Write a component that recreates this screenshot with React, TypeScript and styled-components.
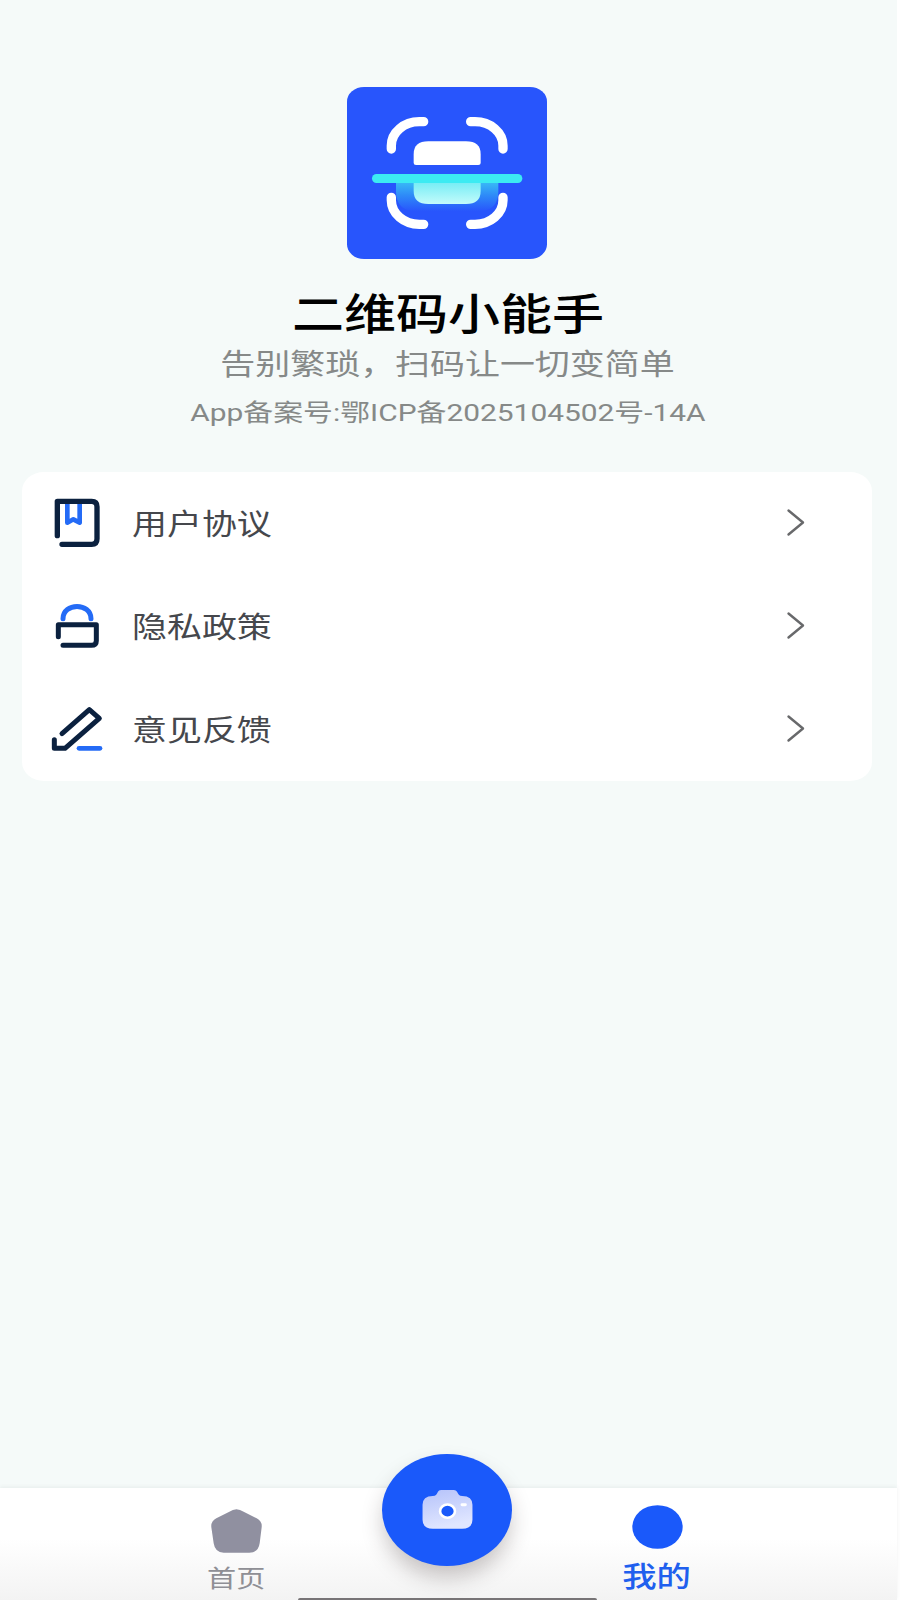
import React from 'react';
import styled, { createGlobalStyle } from 'styled-components';

const GlobalStyle = createGlobalStyle`
  *, *::before, *::after { box-sizing: border-box; }
  body { margin: 0; background: #fff; }
`;

const Page = styled.div`
  display: flex;
  flex-direction: column;
  width: 900px;
  height: 1600px;
  padding-right: 3px;
  overflow: hidden;
  background: #fff;
  font-family: Roboto, 'Noto Sans CJK SC', sans-serif;
`;

const Content = styled.main`
  flex: 1;
  padding: 87px 25px 0 22px;
  background: #f5faf9;
`;

const Profile = styled.header`
  display: flex;
  flex-direction: column;
  align-items: center;
  height: 385px;
`;

const Logo = styled.svg`
  display: block;
  width: 200px;
  height: 172px;
  margin-bottom: 31px;
`;

const WideText = styled.span<{ $origin?: string; $stretch?: number }>`
  display: inline-block;
  white-space: nowrap;
  transform: scaleX(${(p) => p.$stretch ?? 1.205});
  transform-origin: ${(p) => p.$origin ?? 'center'};
`;

const Title = styled.h1`
  margin: 0;
  height: 50px;
  padding-left: 2px;
  font-size: 43px;
  line-height: 51px;
  font-weight: 500;
  color: #000;
`;

const Tagline = styled.p`
  margin: 0;
  height: 49px;
  padding-left: 2px;
  font-size: 29px;
  line-height: 51px;
  color: #868988;
`;

const License = styled.p`
  margin: 0;
  padding-left: 2px;
  font-size: 24px;
  line-height: 48px;
  color: #868988;
`;

const Menu = styled.ul`
  margin: 0;
  padding: 0;
  list-style: none;
  border-radius: 22px / 19px;
  background: #fff;
`;

const MenuRow = styled.li`
  display: flex;
  align-items: center;
  height: 103px;
  padding: 0 66px 1px 28px;
`;

const MenuIcon = styled.svg`
  width: 56px;
  height: 56px;
  margin-right: 26px;
`;

const MenuLabel = styled.span`
  flex: 1;
  padding-top: 4px;
  font-size: 29px;
  line-height: 44px;
  color: #45474c;
`;

const Chevron = styled.svg`
  width: 20px;
  height: 30px;
`;

const TabBar = styled.nav`
  position: relative;
  display: flex;
  justify-content: space-between;
  height: 112px;
  padding: 0 187px 0 183px;
  background: linear-gradient(#fff 45%, #f3f3f3);
  box-shadow: 0 -1px 4px rgba(60, 80, 80, 0.08);
`;

const Tab = styled.a<{ $active?: boolean }>`
  display: flex;
  flex-direction: column;
  align-items: center;
  width: ${(p) => (p.$active ? 106 : 107)}px;
  padding-top: ${(p) => (p.$active ? 17 : 21)}px;
  font-size: ${(p) => (p.$active ? 28.5 : 24.2)}px;
  line-height: ${(p) => (p.$active ? 58 : 53)}px;
  font-weight: ${(p) => (p.$active ? 500 : 400)};
  color: ${(p) => (p.$active ? '#205fee' : '#8f8f95')};
`;

const TabIcon = styled.svg`
  flex: none;
  width: 51px;
  height: 44px;
`;

const ScanButton = styled.button`
  position: absolute;
  left: 382px;
  top: -34.5px;
  display: flex;
  align-items: center;
  justify-content: center;
  width: 130px;
  height: 112.5px;
  padding: 0;
  border: 0;
  border-radius: 50%;
  background: #1a59fa;
  box-shadow: 0 12px 22px -2px rgba(50, 35, 35, 0.28);
`;

const HomeIndicator = styled.div`
  position: absolute;
  left: 298px;
  bottom: -2px;
  width: 299px;
  height: 4px;
  border-radius: 2px;
  background: #777476;
`;

const NAVY = '#0b213f';
const BLUE = '#246bf6';

const AgreementIcon = () => (
  <MenuIcon viewBox="151 105 168 168" fill="none" strokeLinecap="round" strokeLinejoin="round">
    <path d="M203 128V188L221 178L240 188V128" stroke={BLUE} strokeWidth="14" />
    <path d="M173 227V124H276Q292 124 292 140V236Q292 253 276 253H187" stroke={NAVY} strokeWidth="16" />
  </MenuIcon>
);

const PrivacyIcon = () => (
  <MenuIcon viewBox="151 414 168 168" fill="none" strokeLinecap="round" strokeLinejoin="round">
    <path d="M190 476C190 427 274 427 274 476" stroke={BLUE} strokeWidth="15" />
    <path d="M176 530V494H290V542Q290 556 275 556H190" stroke={NAVY} strokeWidth="15" />
  </MenuIcon>
);

const FeedbackIcon = () => (
  <MenuIcon viewBox="151 243 168 168" fill="none" strokeLinecap="round" strokeLinejoin="round">
    <path d="M187 341L269 269L299 295L196 385H164V359" stroke={NAVY} strokeWidth="15" />
    <path d="M238 385H301" stroke={BLUE} strokeWidth="14" />
  </MenuIcon>
);

const items = [
  { label: '用户协议', Icon: AgreementIcon },
  { label: '隐私政策', Icon: PrivacyIcon },
  { label: '意见反馈', Icon: FeedbackIcon },
];

export default function App() {
  return (
    <>
      <GlobalStyle />
      <Page>
        <Content>
          <Profile>
            <Logo viewBox="51 51 600 516">
              <defs>
                <linearGradient id="glow" x1="0" y1="0" x2="0" y2="1">
                  <stop offset="0" stopColor="#38b8f6" />
                  <stop offset="0.45" stopColor="#2e8af8" />
                  <stop offset="1" stopColor="#2855fc" />
                </linearGradient>
                <linearGradient id="glass" x1="0" y1="0" x2="0" y2="1">
                  <stop offset="0" stopColor="#77edf5" />
                  <stop offset="1" stopColor="#c3fbfb" />
                </linearGradient>
              </defs>
              <rect x="51" y="51" width="600" height="516" rx="51" ry="44" fill="#2855fc" />
              <path d="M198 338H505V365Q505 424 440 424H263Q198 424 198 365Z" fill="url(#glow)" />
              <g fill="none" stroke="#fff" strokeLinecap="round" strokeWidth="28">
                <path d="M184 237V227A84 72 0 0 1 268 155H281" />
                <path d="M422 155H435A84 72 0 0 1 519 227V237" />
                <path d="M184 382V391A84 72 0 0 0 268 463H281" />
                <path d="M422 463H435A84 72 0 0 0 519 391V382" />
              </g>
              <path d="M251 279V252Q251 214 295 214H408Q452 214 452 252V279Q452 285 445 285H258Q251 285 251 279Z" fill="#fff" />
              <path d="M251 338H452V363Q452 402 408 402H295Q251 402 251 363Z" fill="url(#glass)" />
              <rect x="126" y="312" width="451" height="27" rx="13.5" fill="#3cebf2" />
            </Logo>
            <Title><WideText $stretch={1.21}>二维码小能手</WideText></Title>
            <Tagline><WideText>告别繁琐，扫码让一切变简单</WideText></Tagline>
            <License><WideText $stretch={1.245}>App备案号:鄂ICP备2025104502号-14A</WideText></License>
          </Profile>
          <Menu>
            {items.map(({ label, Icon }) => (
              <MenuRow key={label}>
                <Icon />
                <MenuLabel><WideText $origin="left">{label}</WideText></MenuLabel>
                <Chevron viewBox="0 0 20 30" fill="none" stroke="#68696b" strokeWidth="2.4" strokeLinecap="round" strokeLinejoin="round">
                  <path d="M2.500 2.500L17 14.500L2.500 26.500" />
                </Chevron>
              </MenuRow>
            ))}
          </Menu>
        </Content>
        <TabBar>
          <Tab>
            <TabIcon viewBox="123 209 153 132">
              <path d="M178 217Q199 202 221 217L260 237Q277 246 275 264L269 312Q265 340 238 340H161Q135 340 131 312L124 264Q122 246 139 237Z" fill="#9090a0" />
            </TabIcon>
            <WideText>首页</WideText>
          </Tab>
          <Tab $active>
            <TabIcon viewBox="0 0 51 44">
              <ellipse cx="25.5" cy="22" rx="25.2" ry="21.8" fill="#1a59fa" />
            </TabIcon>
            <WideText>我的</WideText>
          </Tab>
          <HomeIndicator />
          <ScanButton aria-label="扫码">
            <svg width="51" height="39" viewBox="185 152 153 118">
              <defs>
                <linearGradient id="camera" x1="0" y1="0" x2="0.3" y2="1">
                  <stop offset="0" stopColor="#b5c2fa" />
                  <stop offset="1" stopColor="#e0e6ff" />
                </linearGradient>
              </defs>
              <path d="M217 170C236 170 226 152 243 152H279C297 152 288 170 306 170Q337 170 337 197V242Q337 269 306 269H217Q186 269 186 242V197Q186 170 217 170Z" fill="url(#camera)" />
              <ellipse cx="261.500" cy="216" rx="22.500" ry="20" fill="#1a59fa" stroke="#fff" strokeWidth="8" />
              <rect x="301" y="192" width="19" height="9" rx="4.500" fill="#fff" />
            </svg>
          </ScanButton>
        </TabBar>
      </Page>
    </>
  );
}
